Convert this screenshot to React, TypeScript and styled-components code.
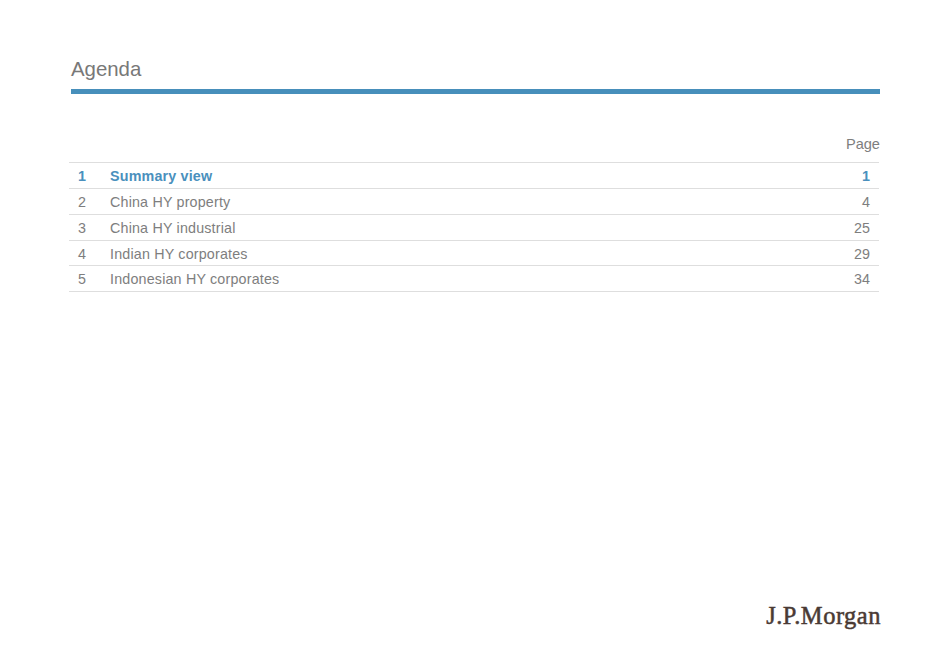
import React from "react";
import styled, { createGlobalStyle } from "styled-components";

const Global = createGlobalStyle`
  html, body { margin: 0; padding: 0; background: #fff; }
  body { font-family: "Liberation Sans", Arial, sans-serif; color: #777; }
`;

const Page = styled.div`
  width: 950px;
  height: 672px;
  box-sizing: border-box;
  padding: 57px 70px 0 71px;
  display: flex;
  flex-direction: column;
  overflow: hidden;
`;

const Title = styled.h1`
  margin: 0;
  height: 32px;
  font-size: 20.4px;
  line-height: 25px;
  font-weight: 400;
  color: #787878;
`;

const Rule = styled.div`
  height: 5px;
  background: #478fbb;
`;

const PageLabel = styled.div`
  margin-top: 41px;
  height: 27px;
  font-size: 14.6px;
  line-height: 18px;
  text-align: right;
  color: #7e7e7e;
`;

const Table = styled.div`
  margin: 0 1px 0 -2px;
  border-top: 1px solid #dedede;
  display: flex;
  flex-direction: column;
`;

const Row = styled.div<{ $active?: boolean }>`
  height: 25.85px;
  box-sizing: border-box;
  border-bottom: 1px solid #dedede;
  display: grid;
  grid-template-columns: 32px 1fr 60px;
  align-items: center;
  padding: 1px 9px 0;
  font-size: 14.3px;
  line-height: 24px;
  font-weight: ${(p) => (p.$active ? 700 : 400)};
  color: ${(p) => (p.$active ? "#4a90bd" : "#7e7e7e")};
`;

const Label = styled.span`
  letter-spacing: 0.18px;
`;

const PageNum = styled.span`
  text-align: right;
`;

const Spacer = styled.div`
  flex: 1;
`;

const Footer = styled.div`
  display: flex;
  justify-content: flex-end;
  padding-bottom: 41px;
`;

const Logo = styled.span`
  font-family: "Liberation Serif", "Times New Roman", serif;
  font-size: 24.5px;
  line-height: 30px;
  letter-spacing: 0.5px;
  margin-right: -1px;
  font-weight: 400;
  color: #4a3a34;
  -webkit-text-stroke: 0.5px #4a3a34;
`;

const rows = [
  { n: 1, label: "Summary view", page: 1, active: true },
  { n: 2, label: "China HY property", page: 4 },
  { n: 3, label: "China HY industrial", page: 25 },
  { n: 4, label: "Indian HY corporates", page: 29 },
  { n: 5, label: "Indonesian HY corporates", page: 34 },
];

export default function App() {
  return (
    <>
      <Global />
      <Page>
        <Title>Agenda</Title>
        <Rule />
        <PageLabel>Page</PageLabel>
        <Table>
          {rows.map((r) => (
            <Row key={r.n} $active={r.active}>
              <span>{r.n}</span>
              <Label>{r.label}</Label>
              <PageNum>{r.page}</PageNum>
            </Row>
          ))}
        </Table>
        <Spacer />
        <Footer>
          <Logo>J.P.Morgan</Logo>
        </Footer>
      </Page>
    </>
  );
}
